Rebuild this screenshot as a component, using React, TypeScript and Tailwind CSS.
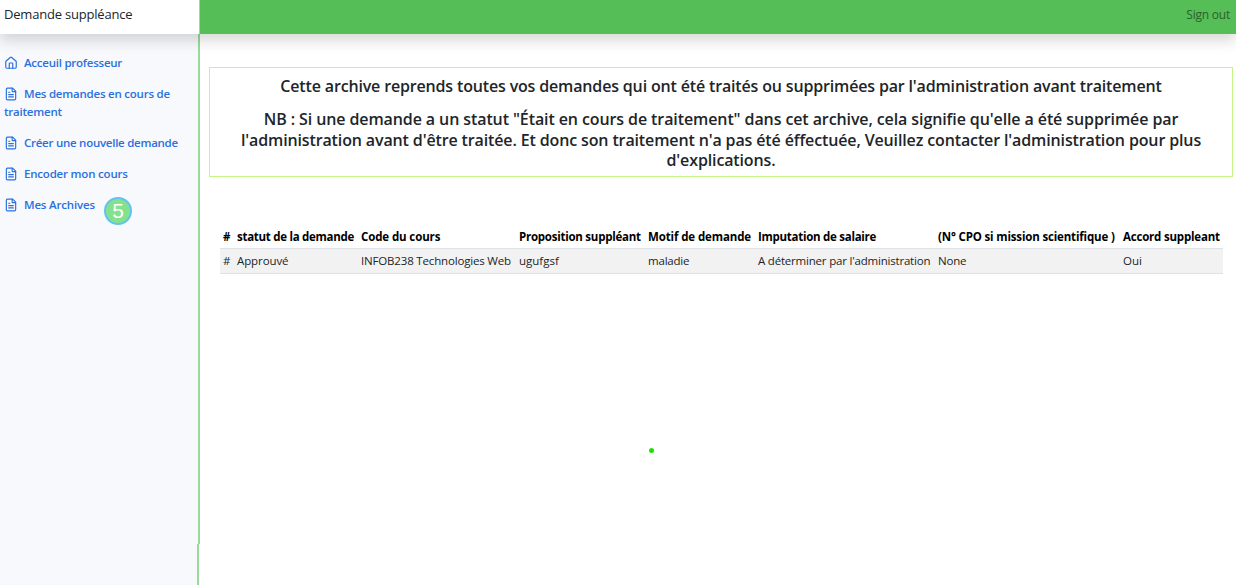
import React from "react";
import { FileText, House } from "lucide-react";

const links = [
  { label: "Acceuil professeur", icon: House, cls: "tracking-[-0.24px]" },
  { label: "Mes demandes en cours de traitement", icon: FileText, cls: "tracking-[-0.22px]" },
  { label: "Créer une nouvelle demande", icon: FileText, cls: "tracking-[-0.26px]" },
  { label: "Encoder mon cours", icon: FileText, cls: "tracking-[-0.2px]" },
  { label: "Mes Archives", icon: FileText, cls: "tracking-[-0.18px]" },
];

const columns = [
  { head: "#", value: "#", width: "w-[14px]", th: "", td: "" },
  { head: "statut de la demande", value: "Approuvé", width: "w-[124px]", th: "tracking-[-0.28px]", td: "tracking-[-0.1px]" },
  { head: "Code du cours", value: "INFOB238 Technologies Web", width: "w-[158px]", th: "tracking-[-0.12px]", td: "tracking-[-0.17px]" },
  { head: "Proposition suppléant", value: "ugufgsf", width: "w-[129px]", th: "tracking-[-0.25px]", td: "" },
  { head: "Motif de demande", value: "maladie", width: "w-[110px]", th: "tracking-[-0.12px]", td: "tracking-[-0.2px]" },
  { head: "Imputation de salaire", value: "A déterminer par l'administration", width: "w-[180px]", th: "tracking-[-0.27px]", td: "tracking-[-0.2px]" },
  { head: "(N° CPO si mission scientifique )", value: "None", width: "w-[185px]", th: "tracking-[-0.16px]", td: "tracking-[-0.2px]" },
  { head: "Accord suppleant", value: "Oui", width: "w-[103px]", th: "tracking-[-0.2px]", td: "" },
];

export default function App() {
  return (
    <div className="relative flex h-[585px] w-[1236px] flex-col overflow-hidden bg-white font-['Open_Sans',sans-serif] text-[#212529]">
      <header className="relative z-10 flex h-[34px] shrink-0 shadow-[0_7px_14px_rgba(0,0,0,0.15)]">
        <div className="w-[200px] border-r border-[#9adb9c] bg-white pl-1 text-[13px] leading-[28px] tracking-[-0.2px] whitespace-nowrap">Demande suppléance</div>
        <div className="flex-1 bg-[#56be56] pr-[6px] text-right text-[12px] leading-[29px] tracking-[-0.22px] text-[#2b602b]">Sign out</div>
      </header>
      <div className="flex min-h-0 flex-1">
        <nav className="flex w-[200px] shrink-0 flex-col">
          <div className="h-[510px] border-r-2 border-[#9adb9c] bg-[#f8f9fc] pt-[20px] pl-1">
            <ul className="flex flex-col gap-[13px]">
              {links.map(({ label, icon: Icon, cls }) => (
                <li key={label} className={`relative text-[11.5px] leading-[18px] font-semibold text-[#2a70dc] ${cls}`}>
                  <Icon className="mr-[6px] inline-block size-[14px] align-[-3px]" strokeWidth={2} />
                  {label}
                  {label === "Mes Archives" && (
                    <span className="absolute top-px left-[100px] flex size-7 items-center justify-center rounded-full border-2 border-[#63c3ee] bg-[#83e28d] font-['Liberation_Sans',sans-serif] text-[21px] font-normal text-white">
                      5
                    </span>
                  )}
                </li>
              ))}
            </ul>
          </div>
          <div className="mr-px flex-1 border-r-2 border-[#9adb9c] bg-[#f8f9fc]" />
        </nav>
        <main className="flex-1 pt-[33px] pr-[3px] pl-[9px]">
          <section className="h-[110px] border border-[#c3f683] pt-[8px] text-center text-[16px] leading-[20.3px] font-semibold whitespace-nowrap">
            <p className="mb-[13px] tracking-[-0.16px]">
              Cette archive reprends toutes vos demandes qui ont été traités ou supprimées par l'administration avant traitement
            </p>
            <p className="tracking-[-0.1px]">
              NB : Si une demande a un statut "Était en cours de traitement" dans cet archive, cela signifie qu'elle a été supprimée par
            </p>
            <p className="tracking-[-0.13px]">
              l'administration avant d'être traitée. Et donc son traitement n'a pas été éffectuée, Veuillez contacter l'administration pour plus
            </p>
            <p className="tracking-[-0.13px]">d'explications.</p>
          </section>
          <table className="mt-[46px] ml-[11px] w-[1003px] table-fixed border-collapse text-left text-[11.5px] leading-[17px] whitespace-nowrap">
            <thead>
              <tr className="h-[25px] text-black">
                {columns.map((c) => (
                  <th key={c.head} className={`p-0 pt-[2px] pl-[3px] font-bold ${c.width} ${c.th}`}>{c.head}</th>
                ))}
              </tr>
            </thead>
            <tbody>
              <tr className="h-[25px] border-y border-[#dee2e6] bg-[#f2f2f2]">
                {columns.map((c) => (
                  <td key={c.head} className={`p-0 pl-[3px] ${c.td}`}>{c.value}</td>
                ))}
              </tr>
            </tbody>
          </table>
        </main>
      </div>
      <span className="absolute top-[448px] left-[649px] size-[5px] rounded-full bg-[#21e000]" />
    </div>
  );
}
